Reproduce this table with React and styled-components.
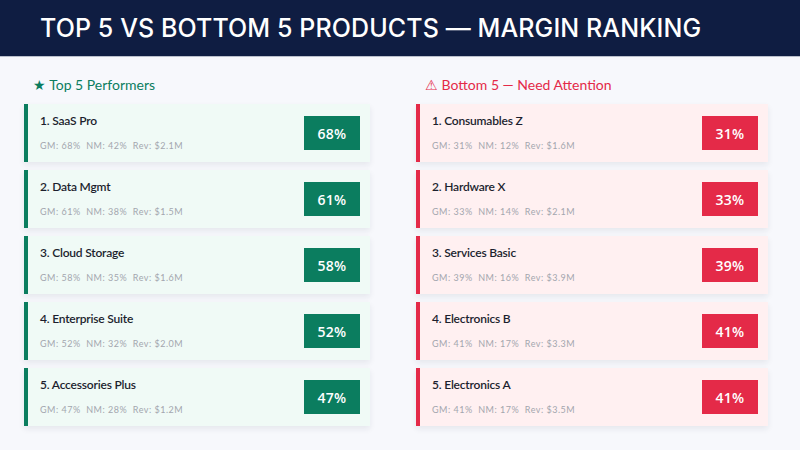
import React from 'react';
import styled, { createGlobalStyle } from 'styled-components';

const GlobalStyle = createGlobalStyle`
  html, body {
    margin: 0;
    padding: 0;
    background: #f7f8fc;
    font-family: Lato, "Open Sans", sans-serif;
  }
`;

// palette per side
const tones = {
  good: { accent: '#0b7d5f', card: '#f0faf6' },
  bad: { accent: '#e42a48', card: '#fff0f1' },
};

const Page = styled.div`
  width: 800px;
  height: 450px;
  overflow: hidden;
  background: #f7f8fc;
`;

const Header = styled.header`
  height: 56px;
  background: #0f1d42;
  border-bottom: 1px solid #b9bfcc;
  display: flex;
  align-items: center;
  padding-left: 40px;
`;

const Title = styled.h1`
  margin: 0;
  color: #ffffff;
  font-family: Inter, "Open Sans", sans-serif;
  font-weight: 500;
  font-size: 25px;
  letter-spacing: 0.1px;
`;

const Columns = styled.main`
  display: grid;
  grid-template-columns: 346px 352px;
  column-gap: 46px;
  padding: 19px 32px 0 24px;
`;

const Column = styled.section`
  display: flex;
  flex-direction: column;
`;

const SectionTitle = styled.h2`
  margin: 0 0 10px 9px;
  font-size: 14px;
  line-height: 18px;
  font-weight: 400;
  color: ${(p) => tones[p.tone].accent};
`;

const CardList = styled.div`
  display: flex;
  flex-direction: column;
  gap: 8px;
`;

const Card = styled.div`
  height: 58px;
  box-sizing: border-box;
  display: flex;
  align-items: center;
  justify-content: space-between;
  padding: 0 10px 0 12px;
  background: ${(p) => tones[p.tone].card};
  border-left: 4px solid ${(p) => tones[p.tone].accent};
  box-shadow: 0 3px 6px rgba(30, 40, 70, 0.08);
`;

const Info = styled.div`
  display: flex;
  flex-direction: column;
  align-self: stretch;
  padding-top: 10px;
`;

const Name = styled.div`
  font-size: 12px;
  line-height: 14px;
  font-weight: 600;
  color: #1c1f2e;
  letter-spacing: -0.2px;
`;

const Metrics = styled.div`
  margin-top: 12px;
  font-size: 9px;
  line-height: 12px;
  color: #a3a6ae;
  letter-spacing: 0.5px;
  white-space: pre;
`;

const Badge = styled.div`
  width: 56px;
  height: 34px;
  display: flex;
  align-items: center;
  justify-content: center;
  background: ${(p) => tones[p.tone].accent};
  color: #ffffff;
  font-family: "Open Sans", sans-serif;
  font-weight: 600;
  font-size: 14px;
  letter-spacing: 0.3px;
`;

const topFive = [
  { name: 'SaaS Pro', gm: 68, nm: 42, rev: '2.1' },
  { name: 'Data Mgmt', gm: 61, nm: 38, rev: '1.5' },
  { name: 'Cloud Storage', gm: 58, nm: 35, rev: '1.6' },
  { name: 'Enterprise Suite', gm: 52, nm: 32, rev: '2.0' },
  { name: 'Accessories Plus', gm: 47, nm: 28, rev: '1.2' },
];

const bottomFive = [
  { name: 'Consumables Z', gm: 31, nm: 12, rev: '1.6' },
  { name: 'Hardware X', gm: 33, nm: 14, rev: '2.1' },
  { name: 'Services Basic', gm: 39, nm: 16, rev: '3.9' },
  { name: 'Electronics B', gm: 41, nm: 17, rev: '3.3' },
  { name: 'Electronics A', gm: 41, nm: 17, rev: '3.5' },
];

const Ranking = ({ tone, heading, items }) => (
  <Column>
    <SectionTitle tone={tone}>{heading}</SectionTitle>
    <CardList>
      {items.map((item, i) => (
        <Card key={item.name} tone={tone}>
          <Info>
            <Name>{i + 1}. {item.name}</Name>
            <Metrics>{`GM: ${item.gm}%  NM: ${item.nm}%  Rev: $${item.rev}M`}</Metrics>
          </Info>
          <Badge tone={tone}>{item.gm}%</Badge>
        </Card>
      ))}
    </CardList>
  </Column>
);

export default function App() {
  return (
    <Page>
      <GlobalStyle />
      <Header>
        <Title>TOP 5 VS BOTTOM 5 PRODUCTS — MARGIN RANKING</Title>
      </Header>
      <Columns>
        <Ranking tone="good" heading="★ Top 5 Performers" items={topFive} />
        <Ranking tone="bad" heading="⚠ Bottom 5 — Need Attention" items={bottomFive} />
      </Columns>
    </Page>
  );
}
